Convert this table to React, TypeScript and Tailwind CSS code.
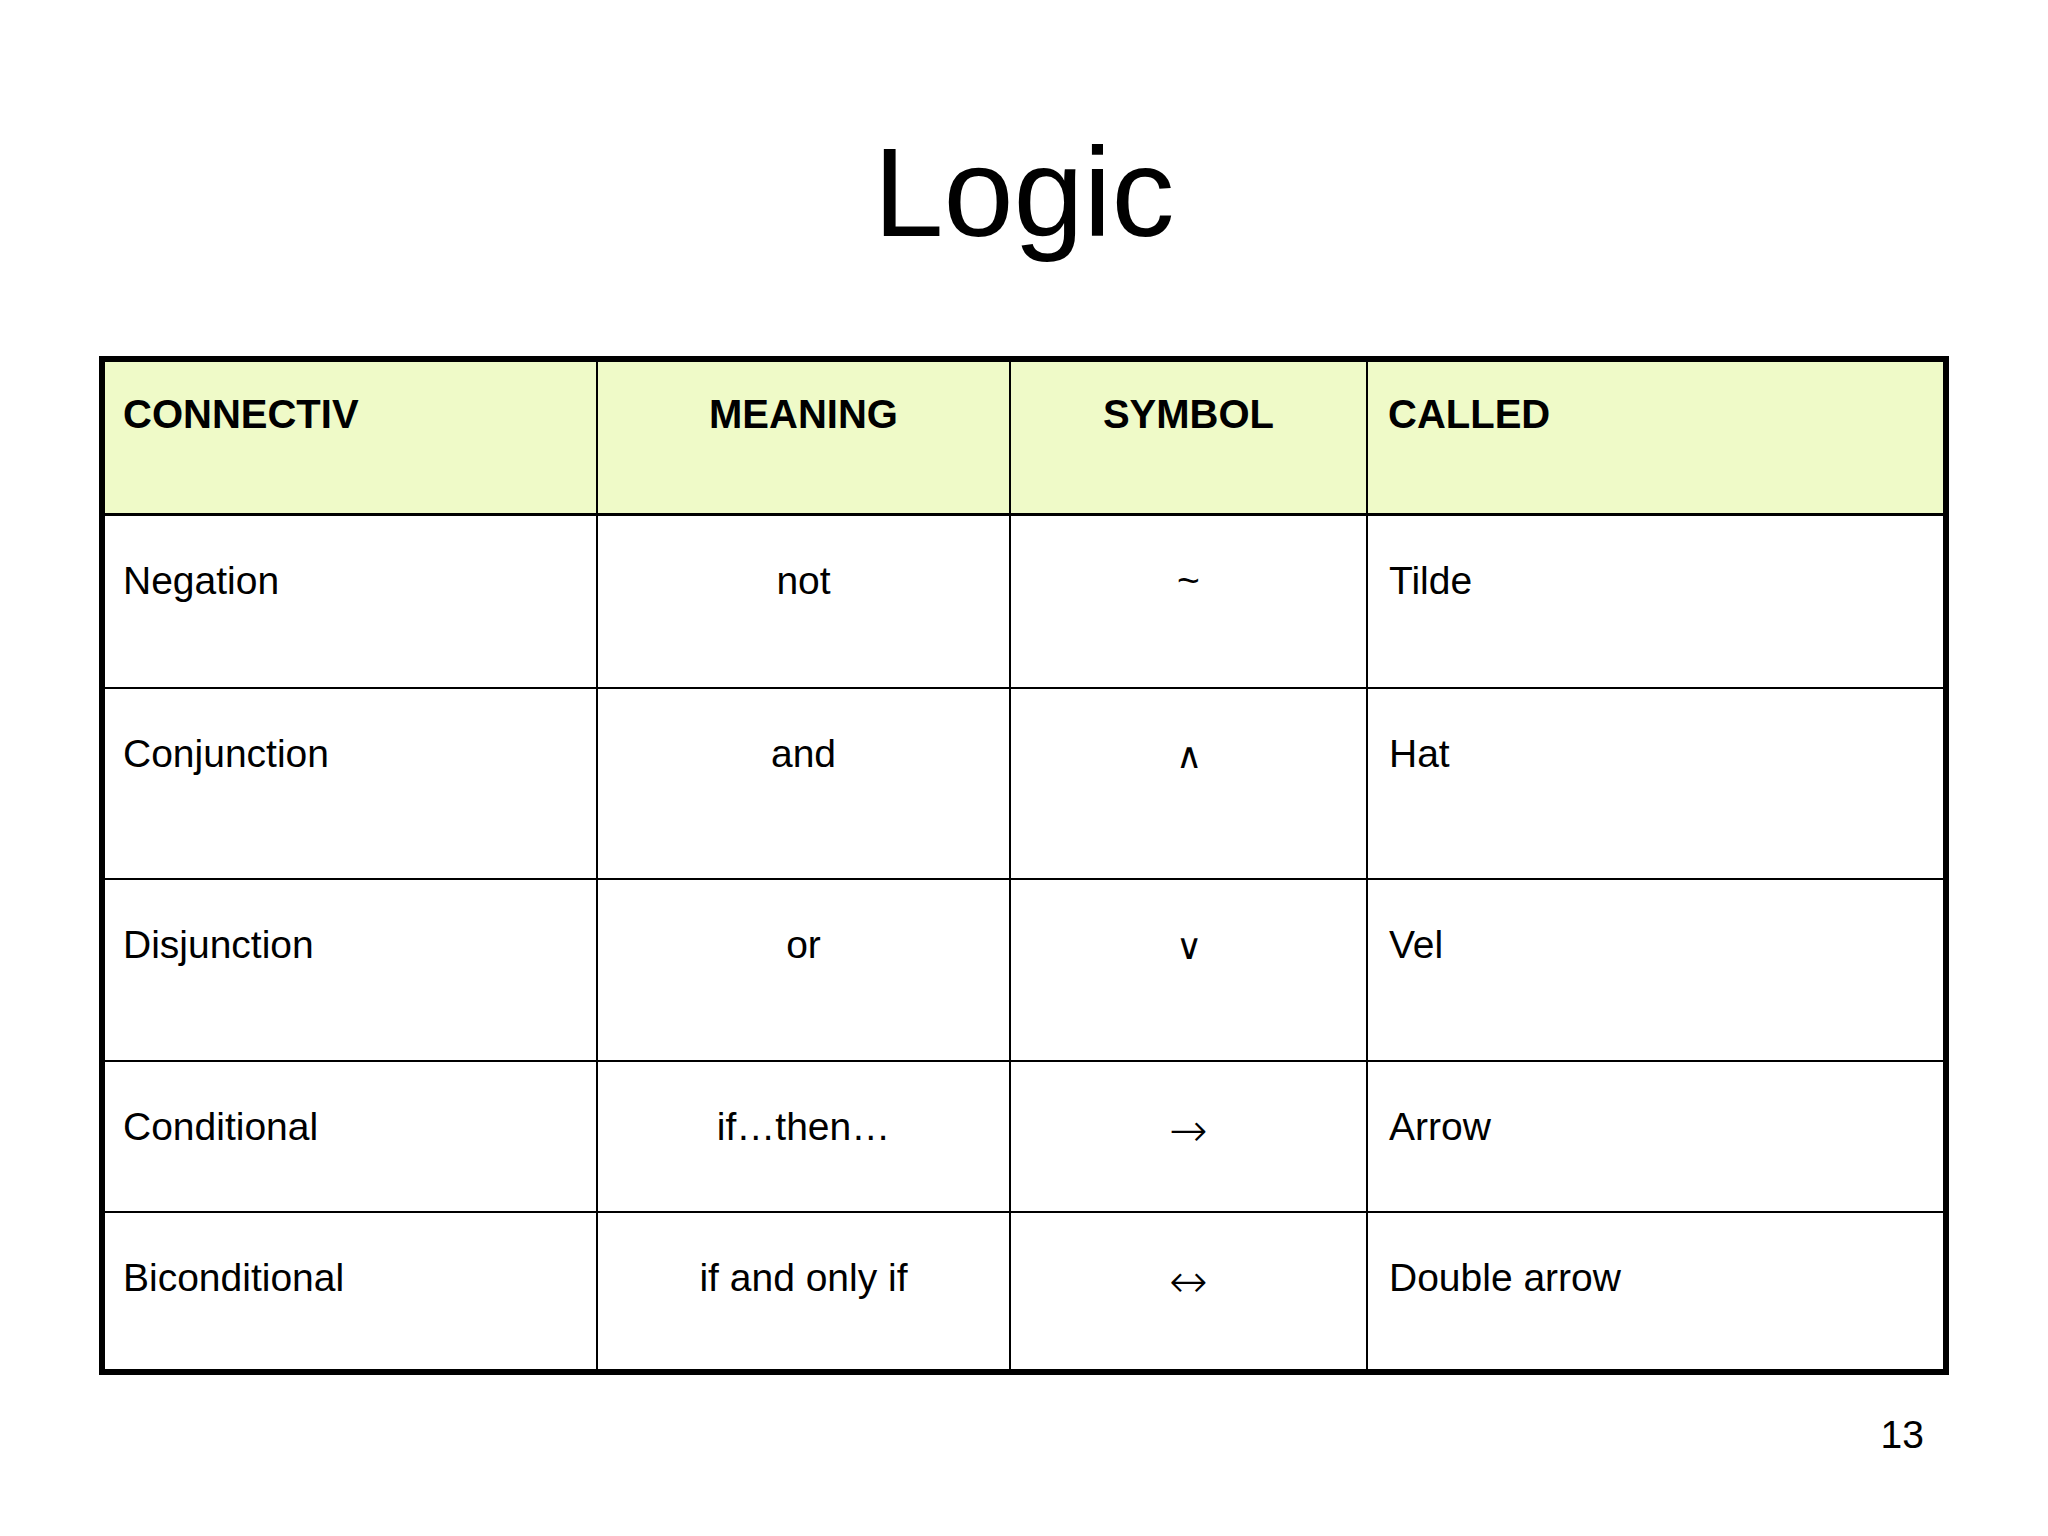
import React from "react";

const rows = [
  { name: "Negation", meaning: "not", symbol: "~", sym: "text-[39px]", called: "Tilde", h: "h-[173px]" },
  { name: "Conjunction", meaning: "and", symbol: "∧", sym: "text-[36px] font-['DejaVu_Sans'] font-extralight pt-[4px]", called: "Hat", h: "h-[191px]" },
  { name: "Disjunction", meaning: "or", symbol: "∨", sym: "text-[36px] font-['DejaVu_Sans'] font-extralight pt-[4px]", called: "Vel", h: "h-[182px]" },
  { name: "Conditional", meaning: "if…then…", symbol: "→", sym: "text-[46px] font-['DejaVu_Sans'] font-extralight pt-[6px]", called: "Arrow", h: "h-[151px]" },
  { name: "Biconditional", meaning: "if and only if", symbol: "↔", sym: "text-[46px] font-['DejaVu_Sans'] font-extralight pt-[6px]", called: "Double arrow", h: "h-[156px]" },
];

const App = () => {
  return (
    <div
      className="w-[2048px] min-h-[1536px] bg-white text-black flex flex-col"
      style={{ fontFamily: '"Liberation Sans", Arial, sans-serif' }}
    >
      <h1 className="pt-[130px] text-center text-[126px] leading-none font-normal">Logic</h1>

      <div className="mt-[100px] ml-[99px] w-[1850px] border-[6px] border-black">
        <div className="grid grid-cols-[493px_413px_357px_575px] bg-[#effac8] h-[154px] border-b-[3px] border-black">
          <div className="border-r-2 border-black pl-[18px] pt-[32px] text-[40px] leading-none font-bold">
            CONNECTIV
          </div>
          <div className="border-r-2 border-black pt-[32px] text-center text-[40px] leading-none font-bold">
            MEANING
          </div>
          <div className="border-r-2 border-black pt-[32px] text-center text-[40px] leading-none font-bold">
            SYMBOL
          </div>
          <div className="pl-[20px] pt-[32px] text-[40px] leading-none font-bold">CALLED</div>
        </div>

        {rows.map((r, i) => (
          <div
            key={r.name}
            className={`grid grid-cols-[493px_413px_357px_575px] ${r.h} ${
              i < rows.length - 1 ? "border-b-2 border-black" : ""
            } text-[39px] leading-none`}
          >
            <div className="border-r-2 border-black pl-[18px] pt-[45px]">{r.name}</div>
            <div className="border-r-2 border-black pt-[45px] text-center">{r.meaning}</div>
            <div className="border-r-2 border-black pt-[45px]">
              <div className={`flex h-[39px] items-center justify-center ${r.sym}`}>{r.symbol}</div>
            </div>
            <div className="pl-[21px] pt-[45px]">{r.called}</div>
          </div>
        ))}
      </div>

      <div className="mt-[40px] pr-[124px] text-right text-[39px] leading-none">13</div>
    </div>
  );
};

export default App;
